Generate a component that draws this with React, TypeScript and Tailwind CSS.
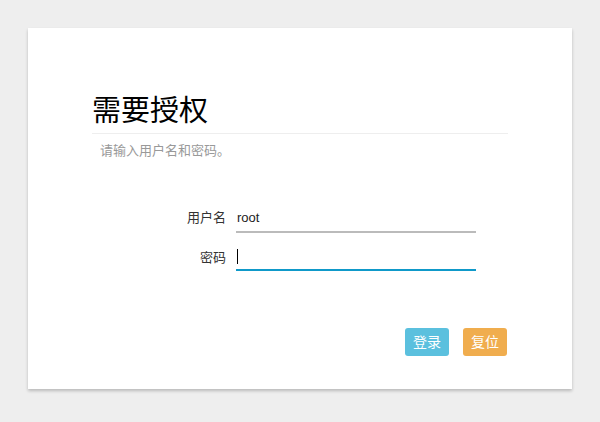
export default function App() {
  return (
    <div className="min-h-[422px] bg-[#eeeeee] pt-[28px] px-[28px] font-['Liberation_Sans','Noto_Sans_CJK_SC',sans-serif]">
      <div className="h-[361px] bg-white shadow-[0_2px_3px_rgba(0,0,0,0.22)] px-[64px] pt-[63px]">
        {/* Header */}
        <h2 className="text-[29px] leading-[34px] text-black font-['Noto_Sans_CJK_SC',sans-serif] pb-[8px] border-b border-[#eeeeee]">
          需要授权
        </h2>
        <p className="mt-[8px] pl-[8px] text-[13px] leading-[18px] text-[#999999]">
          请输入用户名和密码。
        </p>

        {/* Form */}
        <div className="mt-[45px] flex flex-col gap-[10px]">
          <div className="flex items-end">
            <label className="w-[144px] pr-[10px] text-right text-[13px] text-[#333] pb-[6px]">用户名</label>
            <div className="w-[240px] h-[28px] border-b-2 border-[#bbbbbb] flex items-center text-[13px] text-[#222] pl-[1px]">
              root
            </div>
          </div>
          <div className="flex items-end">
            <label className="w-[144px] pr-[10px] text-right text-[13px] text-[#333] pb-[4px]">密码</label>
            <div className="w-[240px] h-[28px] border-b-2 border-[#0f99c9] flex items-center pl-[1px]">
              <span className="w-px h-[15px] bg-black" />
            </div>
          </div>
        </div>

        {/* Actions */}
        <div className="mt-[57px] flex justify-end gap-[14px] pr-[1px]">
          <button className="w-[44px] h-[28px] rounded-[3px] bg-[#5bc0de] text-white text-[14px]">登录</button>
          <button className="w-[44px] h-[28px] rounded-[3px] bg-[#f0ad4e] text-white text-[14px]">复位</button>
        </div>
      </div>
    </div>
  );
}
